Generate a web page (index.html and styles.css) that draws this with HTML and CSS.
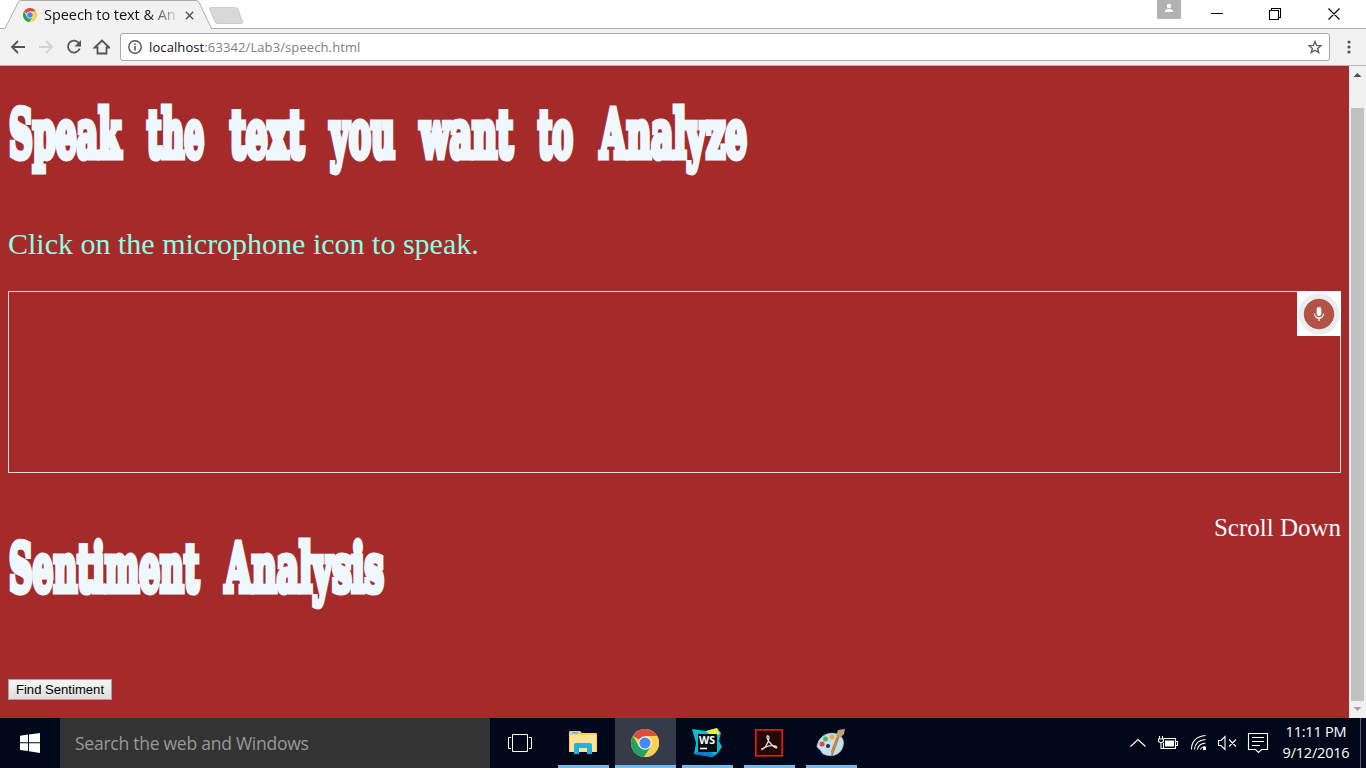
FILE: index.html
```html
<!DOCTYPE html>
<html lang="en">
<head>
<meta charset="utf-8">
<title>Speech to text &amp; Analysis</title>
<link rel="stylesheet" href="styles.css">
</head>
<body>
<svg class="defs" width="0" height="0" aria-hidden="true">
  <symbol id="chrome" viewBox="0 0 28 28">
    <circle cx="14" cy="14" r="14" fill="#ffd04d"/>
    <path d="M14 14 1.9 7A14 14 0 0 1 26.1 7H14z" fill="#dd4b3e"/>
    <path d="M1.9 7A14 14 0 0 0 13 28l7-10.5L14 14 8 17.5z" fill="#1da362"/>
    <path d="M14 7h12.1A14 14 0 0 1 13 28l7-10.5z" fill="#ffd04d"/>
    <circle cx="14" cy="14" r="6.800" fill="#f4f6f8"/>
    <circle cx="14" cy="14" r="5.600" fill="#4688f4"/>
  </symbol>
</svg>

<header class="tabstrip">
  <svg class="tab-shape" width="250" height="29" viewBox="0 0 250 29">
    <path d="M0 28.5H5L18.500 2Q19.200 .5 21 .5H196Q198 .5 198.800 2L211.500 28.500V29H0z" fill="#f2f2f2"/>
    <path d="M0 28.500H5L18.500 2Q19.200 .5 21 .5H196Q198 .5 198.800 2L211.500 28.500H250" fill="none" stroke="#acacac"/>
    <path d="M211 7.500H235Q237 7.500 238 9L242.500 22Q243 23.500 241.500 23.500H218Q216 23.500 215 22L209.500 9Q209 7.500 211 7.500z" fill="#d8d8d8" stroke="#ccc"/>
  </svg>
  <div class="tab">
    <svg class="favicon" width="14" height="14"><use href="#chrome"/></svg>
    <span class="tab-title">Speech to text &amp; An</span>
    <svg class="tab-close" width="9" height="9" viewBox="0 0 9 9"><path d="M.8.8l7.400 7.400M8.200.8.8 8.200" stroke="#555" stroke-width="1.500"/></svg>
  </div>
  <div class="window-controls">
    <svg width="209" height="28" viewBox="0 0 209 28">
      <rect width="24" height="19" fill="#b2b2b2"/>
      <circle cx="12" cy="6" r="2.200" fill="#fff"/><path d="M8 12V11Q8 9 12 9T16 11V12z" fill="#fff"/>
      <path d="M54 13.500H66M112.500 10.500H121.500V19.500H112.500zM114.500 10.500V8.500H123.500V17.500H121.500M171.500 8.500l11 11M182.500 8.500l-11 11" fill="none" stroke="#000" stroke-width="1.100"/>
    </svg>
  </div>
</header>

<nav class="toolbar">
  <svg class="nav-icons" width="110" height="36" viewBox="0 0 110 36" fill="none" stroke-width="1.800">
    <path d="M25 18H12.500M18 12l-6 6 6 6" stroke="#555"/>
    <path d="M39 18H51.500M46 12l6 6-6 6" stroke="#d1d1d1"/>
    <path d="M79 14.200A6 6 0 1 0 79.700 19.500" stroke="#555"/>
    <path d="M81 11v6.500h-6.500z" fill="#555"/>
    <path d="M94.800 18.500 102 11.500l7.200 7H106.500V24.500H97.500V18.500z" stroke="#555"/>
  </svg>
  <div class="address">
    <svg width="14" height="14" viewBox="0 0 14 14"><circle cx="7" cy="7" r="6.200" fill="none" stroke="#555" stroke-width="1.400"/><path d="M6.200 6h1.600v4.500H6.200zM6.200 3.500h1.600V5H6.200z" fill="#555"/></svg>
    <span class="url"><b>localhost</b>:63342/Lab3/speech.html</span>
    <svg class="star" width="14" height="14" viewBox="0 0 14 14"><path d="M7 1.500 8.600 5.400 12.900 5.700 9.600 8.400 10.700 12.500 7 10.200 3.300 12.500 4.400 8.400 1.100 5.700 5.400 5.400z" fill="none" stroke="#5f5f5f" stroke-width="1.400"/></svg>
  </div>
  <svg class="dots" width="4" height="14" viewBox="0 0 4 14" fill="#555"><circle cx="2" cy="2" r="1.600"/><circle cx="2" cy="7" r="1.600"/><circle cx="2" cy="12" r="1.600"/></svg>
</nav>

<div class="viewport">
  <main class="page">
    <h1 class="headline">
      <svg width="760" height="90" viewBox="0 0 760 90">
        <text x="1" y="61" textLength="112" lengthAdjust="spacingAndGlyphs">Speak</text>
        <text x="139" y="61" textLength="57" lengthAdjust="spacingAndGlyphs">the</text>
        <text x="222" y="61" textLength="74" lengthAdjust="spacingAndGlyphs">text</text>
        <text x="322" y="61" textLength="65" lengthAdjust="spacingAndGlyphs">you</text>
        <text x="412" y="61" textLength="93" lengthAdjust="spacingAndGlyphs">want</text>
        <text x="530" y="61" textLength="35" lengthAdjust="spacingAndGlyphs">to</text>
        <text x="592" y="61" textLength="147" lengthAdjust="spacingAndGlyphs">Analyze</text>
      </svg>
    </h1>
    <p class="hint">Click on the microphone icon to speak.</p>
    <section class="results">
      <svg class="mic" width="44" height="45" viewBox="0 0 44 45">
        <rect width="44" height="45" fill="#fff"/><circle cx="22" cy="23" r="20.500" fill="#ececec"/><circle cx="22" cy="23" r="14.800" fill="#b25346" stroke="#a84036" stroke-width=".8"/>
        <rect x="19.700" y="16" width="4.600" height="9" rx="2.300" fill="#fff"/><path d="M17.500 22.500a4.500 4.500 0 0 0 9 0M22 27v3" fill="none" stroke="#fff" stroke-width="1.300"/>
      </svg>
    </section>
    <div class="sentiment">
      <h1 class="headline">
        <svg width="400" height="90" viewBox="0 0 400 90">
          <text x="1" y="61" textLength="190" lengthAdjust="spacingAndGlyphs">Sentiment</text>
          <text x="217" y="61" textLength="159" lengthAdjust="spacingAndGlyphs">Analysis</text>
        </svg>
      </h1>
      <span class="scroll-down">Scroll Down</span>
    </div>
    <button class="find">Find Sentiment</button>
  </main>
  <aside class="scrollbar">
    <svg width="17" height="42" viewBox="0 0 17 42"><path d="M4.500 11 8.500 7l4 4z" fill="#505050"/></svg>
    <div class="thumb"></div>
    <svg width="17" height="17" viewBox="0 0 17 17"><path d="M4.500 6h8l-4 4z" fill="#a3a3a3"/></svg>
  </aside>
</div>

<footer class="taskbar">
  <div class="start"><svg width="20" height="20" viewBox="0 0 20 20" fill="#fff"><path d="M0 2.700 8 1.600V9.300H0zM9 1.400 20 0V9.300H9zM0 10.300H8V18L0 17zM9 10.300H20V20L9 18.200z"/></svg></div>
  <div class="search"><span>Search the web and Windows</span></div>
  <div class="task-view"><svg width="24" height="18" viewBox="0 0 24 18" fill="none" stroke="#fff"><path d="M4.500.5h15v17h-15zM3 3.500H.5v11H3M21 3.500h2.500v11H21"/></svg></div>
  <div class="app">
    <svg class="folder" width="28" height="24" viewBox="0 0 28 24"><path d="M0 2Q0 1 1 1H11l2 2H27Q28 3 28 4V22H0z" fill="#f4cf62"/><path d="M1 5H27V22H1z" fill="#ffe391"/><path d="M3 2h6v1.600H3z" fill="#3fc5e8"/><path d="M5 24V15Q5 13 7 13H21Q23 13 23 15V24H18V18H10V24z" fill="#19b5ea"/></svg>
  </div>
  <div class="app active"><svg width="28" height="28"><use href="#chrome"/></svg></div>
  <div class="app">
    <svg width="30" height="30" viewBox="0 0 30 30"><path d="M0 1 14 3 25 0 29 5 27 13 30 19 25 26 20 29 2 26 4 15z" fill="#08bdd0"/><path d="M14 3 25 0 28 6 20 9z" fill="#e8ee45"/><path d="M2 26 8 22 22 25 20 29z" fill="#087fca"/><rect x="6" y="6" width="19" height="18" fill="#080d12"/><text class="ws" x="7" y="16" textLength="16" lengthAdjust="spacingAndGlyphs">WS</text><path d="M8 20.500h7" stroke="#fff" stroke-width="1.500"/></svg>
  </div>
  <div class="app">
    <svg width="28" height="28" viewBox="0 0 28 28"><rect x=".8" y=".8" width="26.400" height="26" fill="#250707" stroke="#ed1b0c" stroke-width="1.600"/><path d="M7 20C9 21 14 13 14 9 14 6.500 12 6 12 8 12 11 18 18 21 19 24 18 18 15 11 18 8 19 6.500 20 7 21z" fill="none" stroke="#ddd" stroke-width="1.300"/></svg>
  </div>
  <div class="app">
    <svg width="30" height="28" viewBox="0 0 30 28"><path d="M2 14C4 7 13 2 21 5 28 8 29 14 26 20 23 26 16 28 10 26 5 25 6 22 3 20 0 18 1 16 2 14z" fill="#c3e0ef" stroke="#8bb9d2" stroke-width=".7"/><circle cx="6" cy="15" r="2.500" fill="#dc4b3e"/><circle cx="9.500" cy="10" r="2.500" fill="#59b253"/><circle cx="16" cy="8" r="2.500" fill="#efb32f"/><circle cx="12" cy="17" r="2" fill="#18313f"/><path d="M24 5 21 14 16 27 15.500 22 21 8z" fill="#df8a30" stroke="#a7601d" stroke-width=".6"/><path d="M22 1 29 0 28 5 24 9 20 7z" fill="#c5a17a"/></svg>
  </div>
  <div class="tray">
    <svg width="140" height="24" viewBox="0 0 140 24" fill="none" stroke="#fff" stroke-width="1.100">
      <path d="M.5 15.500 8 8.500l7.500 7"/>
      <path d="M33.500 7.500H45.500V17.500H33.500V12M46 10.500h1.500v4H46M29.500 5v3M32.500 5v3M28.500 8h5v2.500q-2.500 2-5 0zM31 12v5.500h2.500"/><path d="M35 9.500h9v6H35z" fill="#fff" stroke="none"/>
      <path d="M61.500 18.500Q61.500 6 75.500 4.500M64.500 18.500Q65 9.500 75.500 8.500M67.500 18.500Q68 13 75.500 12M70.500 18.500Q71 16 75.500 15.500"/><path d="M73 16h3v3h-3z" fill="#fff" stroke="none"/>
      <path d="M88.500 9.500h2.500l4-4v13l-4-4h-2.500zM99 8.500l7 7M106 8.500l-7 7"/>
      <path d="M118.500 2.500h19v16h-6l-3 3-3-3h-7zM122 6.500h12M122 10.500h12M122 14.500h8"/>
    </svg>
  </div>
  <div class="clock"><span>11:11 PM</span><span>9/12/2016</span></div>
  <div class="show-desktop"></div>
</footer>
</body>
</html>
```
FILE: styles.css
```css
* { box-sizing: border-box; }
body { margin: 0; width: 1366px; height: 768px; overflow: hidden; display: flex; flex-direction: column; background: #fff; }
svg { display: block; flex: none; }
.defs { position: absolute; }
.tabstrip { height: 29px; display: flex; justify-content: space-between; position: relative; border-bottom: 1px solid #acacac; }
.tab-shape { position: absolute; left: 0; top: 0; }
.tab { position: relative; display: flex; align-items: center; padding-left: 23px; height: 30px; }
.tab-title { margin-left: 7px; width: 134px; white-space: nowrap; font: 14.5px/20px "Open Sans", sans-serif; letter-spacing: -.05px; color: #111; -webkit-mask-image: linear-gradient(90deg, #000 104px, transparent 138px); mask-image: linear-gradient(90deg, #000 104px, transparent 138px); }
.tab-close { margin-left: 7px; }
.toolbar { height: 37px; background: #f2f2f2; border-bottom: 1px solid #b6b4b4; display: flex; align-items: center; flex: none; }
.address { margin-left: 10px; width: 1210px; height: 28px; border: 1px solid #a8a8a8; border-radius: 3px; background: #fff; display: flex; align-items: center; padding: 0 7px; }
.url { margin-left: 7px; font: 13px/20px "Open Sans", sans-serif; letter-spacing: .1px; color: #808080; white-space: nowrap; }
.url b { font-weight: 400; color: #111; }
.star { margin-left: auto; }
.dots { margin-left: 17px; }
.viewport { height: 652px; flex: none; display: flex; }
.page { width: 1349px; background: #a52a2a; padding: 30px 8px 0; }
.headline { margin: 0; height: 90px; }
.headline svg { overflow: visible; }
.headline text { font-family: "DejaVu Serif", serif; font-weight: 700; font-size: 66px; fill: #f0f8ff; stroke: #f0f8ff; stroke-width: 7px; stroke-linejoin: miter; stroke-miterlimit: 2; }
.hint { margin: 41px 0 0; height: 34px; font: 30px/34px "Liberation Serif", serif; color: #8cffe4; }
.results { margin: 30px 0 0; width: 1333px; height: 182px; border: 1px solid #ddd; display: flex; justify-content: flex-end; }
.mic { margin: -1px -1px 0 0; }
.sentiment { display: flex; justify-content: space-between; padding-top: 40px; height: 206px; }
.sentiment .headline { margin-top: 17px; }
.scroll-down { font: 25px/30px "Liberation Serif", serif; color: #f0f8ff; }
.find { display: block; width: 104px; height: 21px; border: 1px solid #a3a3a3; background: linear-gradient(#f7f7f7, #ddd); padding: 0; font: 13.1px/17px "Liberation Sans", sans-serif; color: #000; white-space: nowrap; }
.scrollbar { width: 17px; background: #f1f1f1; display: flex; flex-direction: column; align-items: center; }
.thumb { width: 13px; height: 593px; background: #c1c1c1; }
.taskbar { height: 50px; flex: none; background: #000819; display: flex; }
.start { width: 60px; display: grid; place-items: center; }
.search { width: 430px; background: #333; padding-left: 15px; font: 17.5px/51px "Open Sans", sans-serif; letter-spacing: -.25px; color: #999; white-space: nowrap; }
.task-view { width: 60px; display: grid; place-items: center; margin-right: 8px; }
.app { width: 51px; margin-right: 11px; border-bottom: 3px solid #76b9ed; display: grid; place-items: center; padding: 2px 2px 0 0; }
.folder { margin-bottom: 2px; }
.app.active { width: 61px; margin: 0 6px 0 -5px; background: #353b49; }
.ws { font: 700 11px "Open Sans", sans-serif; fill: #fff; }
.tray { margin-left: 262px; padding-top: 13px; }
.clock { margin-left: 12px; width: 68px; display: flex; flex-direction: column; align-items: center; padding-top: 4px; font: 14.500px/20.500px "Open Sans", sans-serif; letter-spacing: -.2px; color: #fff; white-space: nowrap; }
.show-desktop { margin-left: auto; width: 6px; border-left: 1px solid #596070; }
```
